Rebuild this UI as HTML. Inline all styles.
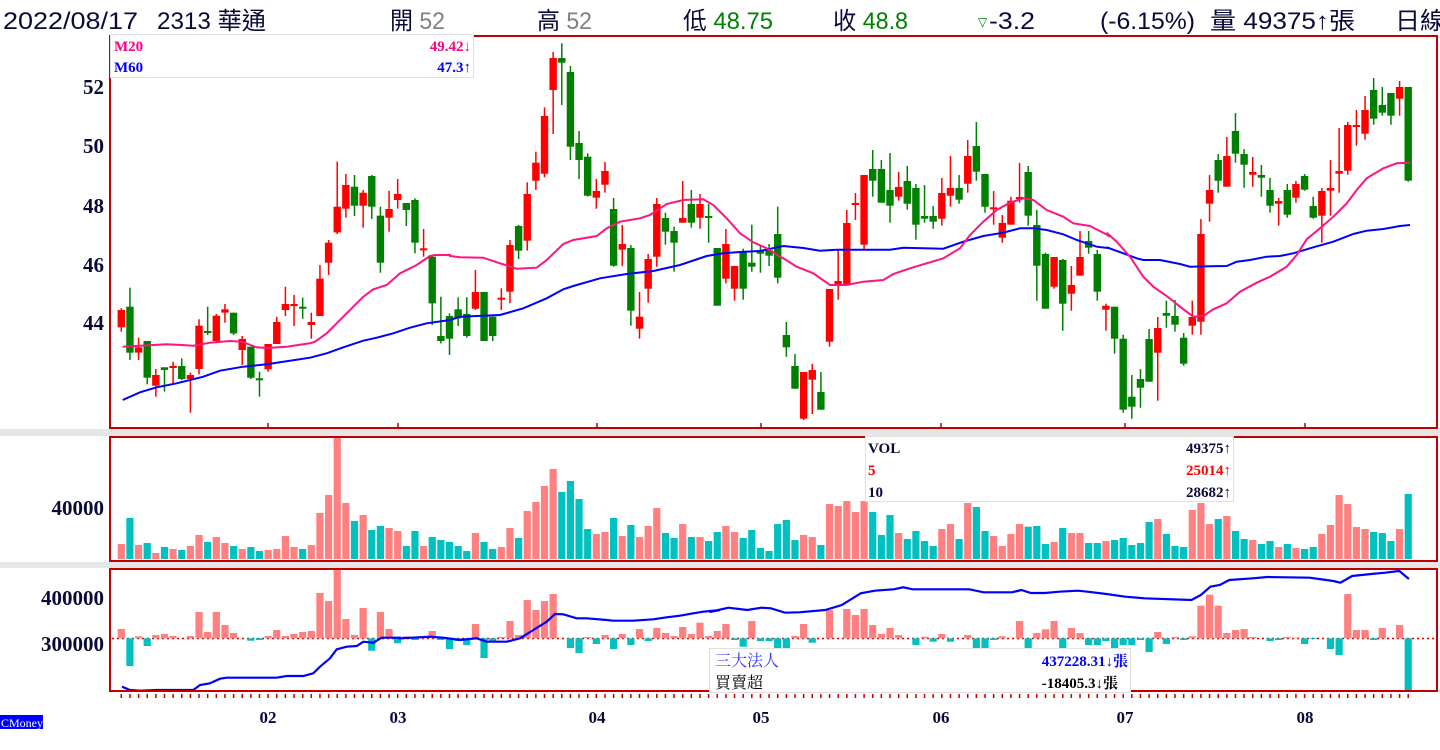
<!DOCTYPE html>
<html><head><meta charset="utf-8">
<style>
html,body{margin:0;padding:0;background:#fff;width:1440px;height:750px;overflow:hidden}
svg{display:block}
.h{font-family:"Liberation Sans","Noto Sans CJK TC",sans-serif;font-size:24px;fill:#0a0a3a}
.ax{font-family:"Liberation Serif","Noto Serif CJK SC",serif;font-weight:bold;font-size:21px;fill:#0a0a3a}
.mo{font-family:"Liberation Serif",serif;font-weight:bold;font-size:17px;fill:#0a0a3a}
.lg{font-family:"Liberation Serif","Noto Serif CJK SC",serif;font-weight:bold;font-size:15px}
</style></head><body>
<svg id="s" width="1440" height="750" xmlns="http://www.w3.org/2000/svg">
<rect x="0" y="0" width="1440" height="750" fill="#fff"/>
<rect x="0" y="429" width="1440" height="7" fill="#e6e6e6"/>
<rect x="0" y="562" width="1440" height="6" fill="#e6e6e6"/>
<g id="g"></g>
<rect x="110" y="36" width="1327" height="392" fill="none" stroke="#c00000" stroke-width="2"/>
<rect x="110" y="437" width="1327" height="124" fill="none" stroke="#c00000" stroke-width="2"/>
<rect x="110" y="569" width="1327" height="122" fill="none" stroke="#c00000" stroke-width="2"/>
<g id="t"></g>
<!-- header -->
<text class="h" x="3" y="29" textLength="135" lengthAdjust="spacingAndGlyphs">2022/08/17</text>
<text class="h" x="157" y="29" textLength="109" lengthAdjust="spacingAndGlyphs">2313 華通</text>
<text class="h" x="390" y="29" textLength="55" lengthAdjust="spacingAndGlyphs">開 <tspan fill="#808080">52</tspan></text>
<text class="h" x="537" y="29" textLength="55" lengthAdjust="spacingAndGlyphs">高 <tspan fill="#808080">52</tspan></text>
<text class="h" x="683" y="29" textLength="90" lengthAdjust="spacingAndGlyphs">低 <tspan fill="#008000">48.75</tspan></text>
<text class="h" x="833" y="29" textLength="75" lengthAdjust="spacingAndGlyphs">收 <tspan fill="#008000">48.8</tspan></text>
<text x="978" y="26" font-family="'Liberation Sans',sans-serif" font-size="12" fill="#008000">▽</text>
<text class="h" x="989" y="29" fill="#008000" textLength="46" lengthAdjust="spacingAndGlyphs">-3.2</text>
<text class="h" x="1100" y="29" textLength="95" lengthAdjust="spacingAndGlyphs">(-6.15%)</text>
<text class="h" x="1210" y="29" textLength="145" lengthAdjust="spacingAndGlyphs">量 49375↑張</text>
<text class="h" x="1395" y="29" textLength="50" lengthAdjust="spacingAndGlyphs">日線</text>
<!-- M legend -->
<rect x="110.5" y="34.5" width="363" height="43" fill="#fff" stroke="#e0e0e0"/>
<text class="lg" x="114" y="51" fill="#ff0080">M20</text>
<text class="lg" x="471" y="51" fill="#ff0080" text-anchor="end">49.42↓</text>
<text class="lg" x="114" y="72" fill="#0000ff">M60</text>
<text class="lg" x="471" y="72" fill="#0000ff" text-anchor="end">47.3↑</text>
<!-- y axis -->
<text class="ax" x="104" y="94" text-anchor="end">52</text>
<text class="ax" x="104" y="153" text-anchor="end">50</text>
<text class="ax" x="104" y="213" text-anchor="end">48</text>
<text class="ax" x="104" y="272" text-anchor="end">46</text>
<text class="ax" x="104" y="330" text-anchor="end">44</text>
<text class="ax" x="104" y="515" text-anchor="end">40000</text>
<text class="ax" x="104" y="605" text-anchor="end">400000</text>
<text class="ax" x="104" y="651" text-anchor="end">300000</text>
<!-- VOL legend -->
<rect x="865.5" y="436.5" width="368" height="65" fill="#fff" stroke="#e0e0e0"/>
<text class="lg" x="868" y="453" fill="#0a0a3a">VOL</text>
<text class="lg" x="1231" y="453" fill="#0a0a3a" text-anchor="end">49375↑</text>
<text class="lg" x="868" y="475" fill="#ff0000">5</text>
<text class="lg" x="1231" y="475" fill="#ff0000" text-anchor="end">25014↑</text>
<text class="lg" x="868" y="497" fill="#0a0a3a">10</text>
<text class="lg" x="1231" y="497" fill="#0a0a3a" text-anchor="end">28682↑</text>
<!-- inst legend -->
<rect x="709.5" y="648.5" width="421" height="44" fill="#fff" stroke="#e0e0e0"/>
<text x="715" y="666" font-family="'Liberation Serif','Noto Serif CJK SC',serif" font-size="16" fill="#3333ff">三大法人</text>
<text class="lg" x="1128" y="666" fill="#0000ff" text-anchor="end">437228.31↓張</text>
<text x="715" y="688" font-family="'Liberation Serif','Noto Serif CJK SC',serif" font-size="16" fill="#000">買賣超</text>
<text class="lg" x="1118" y="688" fill="#000" text-anchor="end">-18405.3↓張</text>
<!-- months -->
<text class="mo" x="268" y="723" text-anchor="middle">02</text>
<text class="mo" x="398" y="723" text-anchor="middle">03</text>
<text class="mo" x="597" y="723" text-anchor="middle">04</text>
<text class="mo" x="761" y="723" text-anchor="middle">05</text>
<text class="mo" x="941" y="723" text-anchor="middle">06</text>
<text class="mo" x="1125" y="723" text-anchor="middle">07</text>
<text class="mo" x="1305" y="723" text-anchor="middle">08</text>
<rect x="0" y="715" width="43" height="14" fill="#0000ff"/>
<text x="1" y="727" font-family="'Liberation Serif',serif" font-size="12" fill="#fff">CMoney</text>
</svg>
<script>
var C=[
['r',810,862,805,875],['g',800,938,743,960],['r',922,938,893,960],['g',903,1013,903,1033],['r',1005,1037,987,1070],
['g',982,990,982,1055],['r',978,981,965,1035],['g',978,1017,955,1020],['r',1005,1017,998,1118],['r',857,987,838,1003],
['g',873,877,800,885],['r',827,903,822,905],['r',808,818,792,848],['g',818,880,818,885],['r',897,930,888,975],
['g',920,1013,920,1017],['g',1015,1018,995,1070],['r',912,988,912,995],['r',846,912,830,912],['r',792,810,740,828],
['r',792,795,765,858],['g',800,803,773,836],['r',846,855,818,896],['r',716,828,675,828],['r',608,668,600,705],
['r',500,577,365,582],['r',435,506,402,533],['g',440,497,405,528],['r',458,497,450,563],['g',408,500,405,537],
['g',527,668,500,698],['r',507,533,452,575],['r',462,480,417,506],['g',489,510,489,558],['g',480,608,475,640],
['r',625,630,567,650],['g',650,790,645,855],['g',888,903,770,910],['g',828,896,820,945],['g',808,835,772,858],
['g',822,888,772,893],['r',756,806,690,810],['g',756,903,756,903],['g',830,888,830,903],['r',773,776,745,810],
['r',615,755,600,790],['g',558,632,555,657],['r',462,602,427,632],['r',368,422,335,450],['r',228,401,202,412],
['r',54,150,36,282],['g',54,68,10,195],['g',96,320,78,360],['g',309,360,273,417],['g',350,467,340,470],
['r',453,473,417,506],['r',393,434,366,458],['g',507,677,474,680],['r',612,629,555,678],['g',624,812,615,857],
['r',830,866,756,896],['r',657,746,642,788],['r',492,650,474,680],['g',534,575,518,614],['g',573,608,560,695],
['r',534,548,423,548],['g',492,548,450,563],['r',492,533,462,566],['g',528,532,492,608],['g',624,797,624,797],
['r',612,716,567,730],['r',678,746,678,782],['g',636,746,626,779],['g',668,680,554,695],['g',630,641,615,698],
['g',630,647,612,678],['g',582,713,500,730],['g',885,922,846,950],['g',978,1046,942,1046],['r',996,1136,996,1140],
['r',990,1019,972,1122],['g',1056,1109,996,1109],['r',747,905,747,920],['r',723,735,630,779],['r',549,732,510,735],
['r',489,492,459,540],['r',405,614,405,628],['g',387,422,330,470],['g',387,488,360,488],['g',450,497,339,548],
['r',441,470,396,482],['g',423,491,378,509],['g',444,554,432,599],['g',528,536,435,548],['g',528,545,498,566],
['r',459,536,414,557],['r',444,467,348,500],['g',444,479,405,491],['r',348,431,300,458],['g',318,395,246,422],
['g',402,500,402,518],['r',502,505,453,554],['r',549,593,525,608],['r',482,554,470,554],['r',471,477,369,488],
['g',396,527,378,557],['g',555,677,510,782],['g',642,806,638,806],['r',651,740,651,746],['g',660,791,657,872],
['r',735,761,678,812],['r',651,707,573,707],['g',603,623,573,641],['g',642,755,630,782],['r',797,809,791,872],
['g',800,896,800,941],['g',896,1109,884,1118],['g',1070,1100,1005,1136],['g',1017,1043,987,1103],['g',897,1025,867,1025],
['r',864,938,831,1082],['g',819,827,782,863],['g',828,854,780,875],['g',893,971,879,977],['r',831,857,782,884],
['r',582,845,537,884],['r',450,491,405,545],['g',360,422,342,458],['r',348,440,291,440],['g',273,341,219,368],
['g',342,374,327,443],['r',396,404,351,440],['g',405,413,375,470],['g',450,497,414,518],['r',483,491,474,557],
['g',450,524,432,533],['r',432,473,423,488],['g',408,449,402,452],['g',498,533,470,536],['r',453,527,444,608],
['r',444,452,360,527],['r',393,401,264,458],['r',255,392,246,404],['r',255,258,210,317],['r',210,281,168,299],
['g',150,236,114,254],['g',195,218,141,227],['g',159,227,159,254],['r',141,176,123,227],['g',141,422,141,425]];
var V=[544,518,545,543,553,547,549,550,546,535,542,537,543,546,549,547,551,550,549,536,547,549,545,513,495,438,503,521,515,530,526,528,531,
546,531,546,537,540,542,546,551,533,542,549,547,528,538,511,502,486,469,492,481,499,529,534,532,518,536,525,537,526,508,533,538,524,537,537];
var V3=[333,306,288,306,324,300,354,363,282,270,330,315,321,345,222,228,213,246,213,246,315,255,309,327,303,333,348,297,282,327,219,231,303,318,348,312,282,290,288,342,336,294,309,309,339,339,333,330,324,345,339,276,267,312,348,351,240,219,282,267,258,303,327,330,342,333,351,342,354,357,351,312,285,195,222,291,297,306,309,333,297,192];
V3.forEach(function(v){V.push(430+v/3)});
var N=[629,666,636.3,646,635,634,636,638.7,636,612,632,612,625,633,638.3,640.7,640,636,630,636,634,632,631,593,601,570,619,635,608,650.7,612,629,
643.3,636.3,640,636.3,631,640,649,641,645,624,658,641,637,621,635,600,610,601,594,638.3,648,653,637,644,635,649,634,645,629,641,628,633,636,627,634];
var N3=[578,618,603,582,630,650,573,633,633,655,655,618,582,638,624,540,624,537,555,537,585,612,594,615,625,645,620,635,612,635,625,615,654,654,630,619,625,573,654,609,598,573,654,594,609,645,645,633,654,645,645,630,666,606,642,621,630,619,527,494,527,609,600,597,621,625,633,630,621,623,642,627,625,657,675,492,600,600,630,594,625,585,782];
N3.forEach(function(v){N.push(430+v/3)});
var M20z=[[110,40,[[38,920],[170,913],[215,915],[250,917],[300,908],[360,903],[395,905],[440,922],[470,924],[530,920],[600,910],[615,905],[650,880],[700,830],[760,770],[790,748],[830,735],[870,700],[920,675],[960,648],[975,645],[1020,645]]],
[440,40,[[30,648],[60,652],[130,653],[180,670],[230,686],[290,683],[320,660],[370,612],[400,600],[470,588],[500,565],[540,545],[600,535],[630,525],[680,492],[730,480],[790,478],[820,495],[860,535],[900,580],[940,607],[980,625],[1020,650]]],
[770,40,[[40,655],[80,680],[130,700],[180,735],[230,735],[280,725],[340,720],[370,702],[420,685],[480,667],[520,655],[570,625],[600,585],[640,545],[680,510],[720,488],[760,475],[790,480],[830,510],[880,530],[910,550],[960,558],[1000,578],[1020,590]]],
[1100,40,[[20,578],[50,605],[90,650],[130,710],[160,740],[200,768],[240,800],[280,830],[310,828],[340,808],[380,790],[420,755],[470,728],[510,710],[560,680],[590,645],[620,598],[660,565],[700,530],[740,490],[770,450],[800,415],[850,385],[890,370],[930,368]]]];
var M60z=[[110,40,[[38,1080],[90,1057],[140,1042],[200,1030],[280,1010],[330,992],[400,980],[470,973],[520,965],[600,953],[650,940],[700,922],[760,902],[800,893],[850,880],[900,863],[950,850],[1020,840]]],
[440,40,[[60,830],[180,825],[250,805],[320,775],[370,748],[400,738],[480,715],[560,702],[640,693],[720,675],[800,648],[850,640],[900,636],[960,633],[1020,620]]],
[770,40,[[40,618],[100,624],[150,632],[200,629],[360,629],[400,623],[520,626],[580,605],[640,588],[700,578],[750,565],[790,565],[830,570],[880,583],[920,600],[980,620],[1020,625]]],
[1100,40,[[20,622],[70,640],[110,655],[130,660],[180,660],[240,672],[270,680],[330,679],[380,678],[410,665],[450,660],[500,650],[540,648],[580,640],[640,622],[700,605],[760,582],[800,572],[850,567],[900,558],[930,555]]]];
function pts(z){var o=[];z.forEach(function(s){s[2].forEach(function(p){o.push((s[0]+p[0]/3).toFixed(1)+','+(s[1]+p[1]/3).toFixed(1))})});return o.join(' ')}
var B1=[[110,560,[[36,380],[60,390],[90,392],[140,390],[250,390],[270,375],[300,370],[330,356],[350,353],[500,353],[530,348],[580,348],[610,340],[630,320],[660,295],[680,268],[710,260],[740,258],[760,245],[790,248],[815,233],[870,233]]],
[400,430,[[0,625],[90,620],[130,623],[180,630],[230,625],[260,635],[320,635],[360,625],[400,600],[440,575],[465,552],[490,553],[530,565],[560,565],[620,570],[640,572],[700,572],[760,568],[800,562],[840,557],[880,550],[910,545],[960,540]]],
[700,430,[[20,546],[60,533],[100,540],[130,533],[150,535],[180,548],[210,547],[265,540],[300,525],[340,490],[370,482],[410,478],[430,472],[450,478],[570,478],[600,487],[660,487],[680,480],[700,489],[730,489],[760,485],[800,482],[820,485],[860,492],[900,500],[940,505],[1040,510],[1060,495],[1080,470],[1100,465],[1120,450],[1170,445],[1200,441],[1290,443],[1310,447],[1340,453],[1355,458],[1380,438],[1420,432],[1450,428],[1480,423],[1500,447]],2.116]];
var h='';
function X(i){return 121.3+i*8.637}
for(var i=0;i<C.length;i++){var c=C[i],x=X(i),col=c[0]=='r'?'#ff0000':'#008000';
 var bt=40+c[1]/3,bb=40+c[2]/3,wt=40+c[3]/3,wb=40+c[4]/3;if(bb-bt<2){bb=bt+2}
 h+='<rect x="'+(x-0.75).toFixed(2)+'" y="'+wt.toFixed(1)+'" width="1.5" height="'+(wb-wt).toFixed(1)+'" fill="'+col+'"/>';
 h+='<rect x="'+(x-3.7).toFixed(2)+'" y="'+bt.toFixed(1)+'" width="7.4" height="'+(bb-bt).toFixed(1)+'" fill="'+col+'"/>';}
for(var i=0;i<V.length&&i<C.length;i++){var x=X(i),col=C[i][0]=='r'?'#ff8080':'#00c0c0';
 h+='<rect x="'+(x-3.6).toFixed(2)+'" y="'+V[i].toFixed(1)+'" width="7.2" height="'+(559-V[i]).toFixed(1)+'" fill="'+col+'"/>';}
h+='<line x1="112" y1="638.5" x2="1436" y2="638.5" stroke="#d00000" stroke-width="1.5" stroke-dasharray="2,3"/>';
for(var i=0;i<N.length&&i<150;i++){var x=X(i),v=N[i],z=638.3;if(Math.abs(v-z)<0.5)continue;
 var col=v<z?'#ff8080':'#00c0c0',y=Math.min(v,z),hh=Math.abs(v-z);
 h+='<rect x="'+(x-3.6).toFixed(2)+'" y="'+y.toFixed(1)+'" width="7.2" height="'+hh.toFixed(1)+'" fill="'+col+'"/>';}
h+='<polyline points="'+pts(M60z)+'" fill="none" stroke="#0000ff" stroke-width="2"/>';
h+='<polyline points="'+pts(M20z)+'" fill="none" stroke="#ff1480" stroke-width="2"/>';
var bp=[];B1.forEach(function(s){var sx=s[3]||3;s[2].forEach(function(p){bp.push((s[0]+p[0]/sx).toFixed(1)+','+(s[1]+p[1]/3).toFixed(1))})});
h+='<polyline points="'+bp.join(' ')+'" fill="none" stroke="#0000ff" stroke-width="2.2"/>';
document.getElementById('g').innerHTML=h;
var t='';
[268,398,597,761,941,1125,1305].forEach(function(x){t+='<rect x="'+(x-0.75)+'" y="423" width="1.5" height="6" fill="#c00000"/>'});
for(var i=0;i<150;i++){var x=X(i);t+='<rect x="'+(x-0.75).toFixed(2)+'" y="694" width="1.5" height="4" fill="#c00000"/>'}
document.getElementById('t').innerHTML=t;
</script>
</body></html>
